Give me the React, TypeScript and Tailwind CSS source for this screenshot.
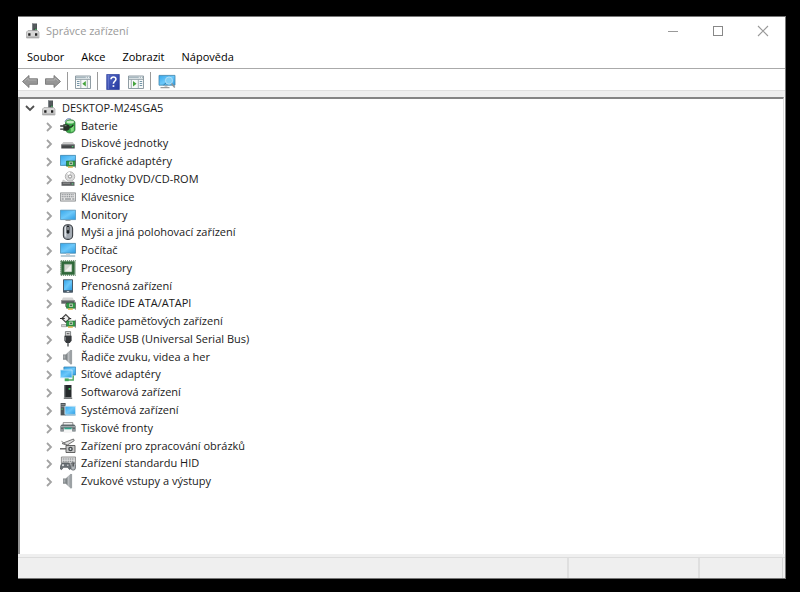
import React, { useState } from "react";

const Svg = ({ children }: { children: React.ReactNode }) => (
  <svg viewBox="0 0 16 16" className="block h-4 w-4 shrink-0" aria-hidden="true">
    {children}
  </svg>
);

const Gradients = () => (
  <svg className="absolute h-0 w-0" aria-hidden="true">
    <defs>
      <linearGradient id="screen" x1="0" y1="0" x2="1" y2="1">
        <stop offset="0" stopColor="#35a6ea" />
        <stop offset="0.5" stopColor="#6cc8fa" />
        <stop offset="1" stopColor="#2c9be2" />
      </linearGradient>
      <linearGradient id="speaker" x1="0" y1="0" x2="1" y2="0">
        <stop offset="0" stopColor="#707578" />
        <stop offset="0.6" stopColor="#c3c7ca" />
        <stop offset="1" stopColor="#777c80" />
      </linearGradient>
      <linearGradient id="help" x1="0" y1="0" x2="1" y2="1">
        <stop offset="0" stopColor="#5468c4" />
        <stop offset="1" stopColor="#2438a0" />
      </linearGradient>
    </defs>
  </svg>
);

const DeviceManagerIcon = () => (
  <Svg>
    <path d="M7 .5h5V9H7z" fill="#484d50" />
    <path d="M7 .5h1.2V9H7z" fill="#7c8285" />
    <path d="M9 2h2.5M9 4h2.5" stroke="#70777a" strokeWidth=".7" />
    <path d="M10.3 5.8h1.2V7h-1.2z" fill="#4cd06a" />
    <path d="M1.5 9 3 7.5h9.5L14 9v6H1.5z" fill="#d6d6d6" stroke="#999" strokeWidth=".6" />
    <path d="M2 13.5h11.5V15H2z" fill="#aaa" />
    <path d="M3.2 10.3h2.3v2.5H3.2zM10 10.3h2.3v2.5H10z" fill="#202020" />
  </Svg>
);

const BatteryIcon = () => (
  <Svg>
    <path d="M5 3.5C6 .8 9 0 11 1.3" fill="none" stroke="#5a73b0" strokeWidth=".9" />
    <path d="M5.5 4.5C5.5 2.6 8 1.7 10.2 1.7S15 2.6 15 4.5v7.3c0 2-2.5 3.2-4.8 3.2s-4.7-1.2-4.7-3.2z" fill="#38a847" stroke="#2b6f33" strokeWidth=".7" />
    <ellipse cx="10.2" cy="4" rx="3.8" ry="1.5" fill="#c5ebc2" />
    <path d="M10.8 10.5 13.8 7v5.5c-.7.8-1.8 1.2-3 1.3z" fill="#83dc80" />
    <path d="M.2 8h3.6M.2 11.2h3.6" stroke="#333" strokeWidth="1.3" />
    <path d="M3.3 6.3h2.9c2.2 0 3.6 1.2 3.6 3.2s-1.4 3.2-3.6 3.2H3.3z" fill="#273227" />
    <path d="M9.3 9.3c2 0 3.2-1 4-2.6" fill="none" stroke="#203a23" strokeWidth="1.4" />
    <path d="M4.5 7.7h2" stroke="#899489" strokeWidth=".9" />
  </Svg>
);

const DiskIcon = () => (
  <Svg>
    <path d="m3.3 7-2 2.7h13.4l-2-2.7z" fill="#c9c9c9" />
    <path d="M1.3 9.5h13.4v4H1.3z" fill="#454749" />
    <path d="M1.3 9.5h13.4v.8H1.3z" fill="#838688" />
    <path d="M11.8 11.2h1.6v1h-1.6z" fill="#52e082" />
  </Svg>
);

const Board = () => (
  <>
    <path d="M6.5 8h9v5.2h-9z" fill="#2e9a46" stroke="#1b612a" strokeWidth=".6" />
    <path d="M9.3 8.6h3.4v3.4H9.3z" fill="#d8dccc" />
    <path d="M10.1 9.4h1.8v1.8h-1.8z" fill="#366842" />
    <path d="M8 13.4h4.8v1.3H8z" fill="#d9ad37" />
    <path d="M15.4 6.8v8" stroke="#777" strokeWidth=".8" />
  </>
);

const GraphicsIcon = () => (
  <Svg>
    <path d="M.4 2.4h15.2v10H.4z" fill="url(#screen)" stroke="#3684ae" strokeWidth=".8" />
    <Board />
  </Svg>
);

const OpticalIcon = () => (
  <Svg>
    <circle cx="10" cy="5.5" r="4.7" fill="#dcdcdc" stroke="#a5a5a5" strokeWidth=".8" />
    <path d="M10 5.5 7 2.2A4.3 4.3 0 0 1 10 1z" fill="#fff" />
    <circle cx="10" cy="5.5" r="1.6" fill="#fff" stroke="#888" strokeWidth=".9" />
    <path d="m3 8.5-1.5 3h13L13.3 10 7 10.5z" fill="#c7c7c7" />
    <path d="M1.5 11h13v3.8h-13z" fill="#5c5e60" />
    <path d="M3 12.2h7" stroke="#aaa" strokeWidth=".7" />
    <path d="M11.8 12.4h1.5v1h-1.5z" fill="#5de286" />
  </Svg>
);

const KeyboardIcon = () => (
  <Svg>
    <path d="M.4 3.9h15.2v8.2H.4z" fill="#e4e4e4" stroke="#7d8184" strokeWidth=".8" />
    <path d="M1.7 5.7h12.6M1.7 7.7h12.6" stroke="#777c80" strokeWidth="1.1" strokeDasharray="1.1 .7" />
    <path d="M1.7 10h2M5 10h6M12.3 10h2" stroke="#777c80" strokeWidth="1.1" />
  </Svg>
);

const MonitorIcon = () => (
  <Svg>
    <path d="M.4 3.2h15.2v9.4H.4z" fill="url(#screen)" stroke="#4f91b6" strokeWidth=".8" />
    <path d="M5.5 13h5v.9h-5z" fill="#999" />
  </Svg>
);

const MouseIcon = () => (
  <Svg>
    <rect x="3.4" y=".7" width="9.2" height="14.7" rx="4" fill="#a4abb3" stroke="#3c4045" strokeWidth="1.1" />
    <path d="M4.7 4.5c0-1.4.7-2.2 1.6-2.5v11.3c-1-.5-1.6-1.3-1.6-2.3z" fill="#dfe3e7" />
    <rect x="6.6" y="1.5" width="2.8" height="8.2" rx="1.4" fill="#1c2024" />
    <path d="M8 3v3.2" stroke="#e3e8ec" strokeWidth="1" />
  </Svg>
);

const ComputerIcon = () => (
  <Svg>
    <path d="M.4 1.4h15.2v9.8H.4z" fill="url(#screen)" stroke="#4386ac" strokeWidth=".8" />
    <path d="M6 11.5h4V13H6z" fill="#d0d0d0" />
    <path d="M.8 14h14.4" stroke="#82a5b7" strokeWidth="1.1" />
  </Svg>
);

const CpuIcon = () => (
  <Svg>
    <path d="M.8.8h14.4v14.4H.8z" fill="none" stroke="#4d7a55" strokeWidth="1.2" strokeDasharray="1.2 .8" />
    <path d="M1.3 1.3h13.4v13.4H1.3z" fill="#2f6839" />
    <path d="M4.3 4.3h7.4v7.4H4.3z" fill="#d3d6d0" stroke="#9cb59f" strokeWidth=".6" />
    <path d="m4.6 11.4 6.8-6.8v6.8z" fill="#f2f2ef" />
  </Svg>
);

const PortableIcon = () => (
  <Svg>
    <rect x="3" y="1.2" width="10" height="13.6" rx=".7" fill="#485866" />
    <path d="M4 2.2h8v10H4z" fill="url(#screen)" />
    <path d="M6.8 13.5h2.4" stroke="#d5dce3" strokeWidth=".9" />
  </Svg>
);

const IdeIcon = () => (
  <Svg>
    <path d="M3 2.5h9.5L14.5 6H1.3z" fill="#d5d5d5" />
    <path d="M1.3 5.2h13.4v3.5H1.3z" fill="#606466" />
    <path d="M1.3 5.2h13.4V6H1.3z" fill="#999" />
    <path d="M5.5 8.5v3h2" fill="none" stroke="#777" strokeWidth=".8" />
    <Board />
  </Svg>
);

const StorageIcon = () => (
  <Svg>
    <path d="m1.8 5.5 4-4 4 4-4 3.7z" fill="#eee" stroke="#444" strokeWidth="1.1" />
    <path d="M0 5.5h4.8M8.5 5.5l2.7.1" stroke="#333" strokeWidth="1.2" />
    <path d="M1.5 11.5h5v2.2h-5z" fill="#d4d4d4" stroke="#888" strokeWidth=".6" />
    <Board />
  </Svg>
);

const UsbIcon = () => (
  <Svg>
    <path d="M5.4.6h5.2V5H5.4z" fill="#d9d9d9" stroke="#65696b" strokeWidth=".8" />
    <path d="M6.8 2h.9v1.2h-.9zM8.4 2h.9v1.2h-.9z" fill="#333" />
    <path d="M4.4 4.8h7.2v5L9.8 12H6.2L4.4 9.8z" fill="#35383b" />
    <path d="M5.5 6v3.7" stroke="#888c8e" strokeWidth=".8" />
    <path d="M7.2 12h1.6v3.5H7.2z" fill="#65696b" />
  </Svg>
);

const SpeakerIcon = () => (
  <Svg>
    <path d="M3 5.5h3.2v5.2H3z" fill="#7b8083" />
    <path d="m6 5.5 4.7-4.3v13.8L6 10.7z" fill="url(#speaker)" stroke="#8b9093" strokeWidth=".5" />
    <path d="M11.2 1v14.3" stroke="#9da2a5" strokeWidth="1.8" />
    <path d="M3.4 6.3h2v3.3h-2z" fill="#a9adb0" />
  </Svg>
);

const NetworkIcon = () => (
  <Svg>
    <path d="M3.9 1h11.7v8H3.9z" fill="url(#screen)" stroke="#3a87b5" strokeWidth=".8" />
    <path d="M.4 4h11.7v7.8H.4z" fill="url(#screen)" stroke="#c9e8f8" strokeWidth=".8" />
    <path d="M8 14h5.2V9.4" fill="none" stroke="#4ca860" strokeWidth="1.4" />
    <path d="M4.7 12.4h4v2.8h-4z" fill="#45a85c" />
  </Svg>
);

const SoftwareIcon = () => (
  <Svg>
    <path d="M4.5 1h7v12.5h-7z" fill="#25292b" />
    <path d="M4.5 1h1v12.5h-1z" fill="#5d6366" />
    <path d="M8.6 4h1.8v1.8H8.6z" fill="#48d66b" />
    <path d="M3.8 13.5h8.4V15H3.8z" fill="#76797b" />
  </Svg>
);

const SystemIcon = () => (
  <Svg>
    <path d="M.6 1h5v12.4h-5z" fill="#4e5558" />
    <path d="M1.3 2.7h3.5M1.3 4.7h3.5" stroke="#a1a8ab" strokeWidth=".8" />
    <path d="M1.5 6.5h1.2v1.2H1.5z" fill="#4cd06a" />
    <path d="M4.9 4.2h10.7v8.2H4.9z" fill="url(#screen)" stroke="#dbeaf2" strokeWidth=".8" />
    <path d="M5.2 13h10.4" stroke="#4b91ba" strokeWidth=".9" />
  </Svg>
);

const PrinterIcon = () => (
  <Svg>
    <path d="M3.2 2.6h9.6V6H3.2z" fill="#f5f5f5" stroke="#777" strokeWidth=".8" />
    <path d="M.4 6 1.8 4.6h12.4L15.6 6v5.6H.4z" fill="#5f696d" />
    <path d="M.8 6h14.4v1.4H.8z" fill="#9ea7aa" />
    <path d="M3.8 8h8.4v5H3.8z" fill="#f6f6f6" />
    <path d="M4.3 7.6h7.4v1.7H4.3z" fill="#2fa18a" />
    <path d="M.7 10h2.8M12.5 10h2.8" stroke="#bcc3c6" />
  </Svg>
);

const ImagingIcon = () => (
  <Svg>
    <path d="M2 5.5 13.5 1l.7 1.7L7 7.3z" fill="#dedede" stroke="#666" strokeWidth=".9" />
    <path d="m1.5 3.3 6 4.2" stroke="#777" />
    <path d="M6 7.5h9v7H6z" fill="#c6c6c6" stroke="#555" strokeWidth=".9" />
    <path d="M0 10.8h6" stroke="#555" strokeWidth="1.3" />
    <circle cx="10.5" cy="11" r="2.3" fill="#44494c" />
    <circle cx="10.5" cy="11" r=".9" fill="#d7dfe4" />
  </Svg>
);

const HidIcon = () => (
  <Svg>
    <path d="M1.4 2h14.2v6.2H1.4z" fill="#e6e6e6" stroke="#777" strokeWidth=".8" />
    <path d="M2.7 4h11.6M2.7 6.2h11.6" stroke="#707579" strokeWidth="1.1" strokeDasharray="1.2 .6" />
    <path d="M2.3 8h6.5c1.3 1 1.9 3.5 1.7 6-.7 1-1.6.5-2.5-1.7H3C2.4 14.8 1 15 .5 14 .3 11.3 1 9 2.3 8z" fill="#6c7277" stroke="#474d51" strokeWidth=".7" />
    <path d="M2 10.2h2M3 9.2v2M7 10.2h1.5" stroke="#fff" strokeWidth=".8" />
    <rect x="10.9" y="7.5" width="4.5" height="7.6" rx="2.1" fill="#b0b5b9" stroke="#555b60" strokeWidth=".8" />
    <path d="M13.1 8v3.5" stroke="#222" />
  </Svg>
);

const BackIcon = () => (
  <Svg>
    <path d="M.5 7.5 7 1.5v3.3h8.5v5.5H7v3.2z" fill="#969696" stroke="#777" strokeWidth=".9" />
    <path d="M2.5 7.2 6.2 4v2h8.3" fill="none" stroke="#b5b5b5" strokeWidth=".8" />
  </Svg>
);

const ForwardIcon = () => (
  <Svg>
    <path d="M15.5 7.5 9 1.5v3.3H.5v5.5H9v3.2z" fill="#969696" stroke="#777" strokeWidth=".9" />
    <path d="M1.5 6h8.3V4l3.6 3.2" fill="none" stroke="#b5b5b5" strokeWidth=".8" />
  </Svg>
);

const ConsoleTreeIcon = () => (
  <Svg>
    <path d="M.5 2h15v12.5H.5z" fill="#f7f9f9" stroke="#83929a" strokeWidth=".9" />
    <path d="M1 2.4h14v2H1z" fill="#a8b8c0" />
    <path d="M10.8 3.3h1M13 3.3h1" stroke="#fff" />
    <path d="M.8 5.5h14.4M5.8 5.5v9M12.3 5.5v9" stroke="#8f9da4" strokeWidth=".8" />
    <path d="M2 7.5h2.5M2 9.5h2.5M2 11.5h2.5" stroke="#64899e" strokeWidth=".9" />
    <path d="M10.8 7v5.4L7.3 9.7z" fill="#45a33c" />
  </Svg>
);

const ActionPaneIcon = () => (
  <Svg>
    <path d="M.5 2h15v12.5H.5z" fill="#f7f9f9" stroke="#83929a" strokeWidth=".9" />
    <path d="M1 2.4h14v2H1z" fill="#a8b8c0" />
    <path d="M10.8 3.3h1M13 3.3h1" stroke="#fff" />
    <path d="M.8 5.5h14.4M3.3 5.5v9M10.3 5.5v9" stroke="#8f9da4" strokeWidth=".8" />
    <path d="M11.7 7.5h2.5M11.7 9.5h2.5M11.7 11.5h2.5" stroke="#64899e" strokeWidth=".9" />
    <path d="M5 7v5.4l3.5-2.7z" fill="#45a33c" />
  </Svg>
);

const HelpIcon = () => (
  <Svg>
    <path d="M1.7.4h12.6v15.2H1.7z" fill="url(#help)" stroke="#2b3d9b" strokeWidth=".7" />
    <path d="M3.4 1v14" stroke="#7181d2" strokeWidth=".7" />
    <path d="M6 5.3C6 3.7 7 3 8.4 3s2.5.8 2.5 2.2c0 2-2.5 2.1-2.5 4.5" fill="none" stroke="#fff" strokeWidth="1.6" />
    <path d="M7.6 11.2h1.7v1.7H7.6z" fill="#fff" />
  </Svg>
);

const ScanIcon = () => (
  <svg viewBox="0 0 18 16" className="block h-4 w-[18px]" aria-hidden="true">
    <path d="M1 1.4h16v9.8H1z" fill="url(#screen)" stroke="#4386ac" strokeWidth=".8" />
    <path d="M2.5 13.7h9M6.5 12h3" stroke="#9b9b9b" strokeWidth="1.2" />
    <circle cx="11" cy="6.6" r="3.6" fill="#7fcdf4" stroke="#b5e0f6" strokeWidth=".9" />
    <path d="m13.5 9.5 3.3 4" stroke="#909699" strokeWidth="1.5" />
    <path d="m8 9-2.5 2" stroke="#3a84ad" />
  </svg>
);

const categories = [
  { label: "Baterie", Icon: BatteryIcon },
  { label: "Diskové jednotky", Icon: DiskIcon },
  { label: "Grafické adaptéry", Icon: GraphicsIcon },
  { label: "Jednotky DVD/CD-ROM", Icon: OpticalIcon },
  { label: "Klávesnice", Icon: KeyboardIcon },
  { label: "Monitory", Icon: MonitorIcon },
  { label: "Myši a jiná polohovací zařízení", Icon: MouseIcon },
  { label: "Počítač", Icon: ComputerIcon },
  { label: "Procesory", Icon: CpuIcon },
  { label: "Přenosná zařízení", Icon: PortableIcon },
  { label: "Řadiče IDE ATA/ATAPI", Icon: IdeIcon },
  { label: "Řadiče paměťových zařízení", Icon: StorageIcon },
  { label: "Řadiče USB (Universal Serial Bus)", Icon: UsbIcon },
  { label: "Řadiče zvuku, videa a her", Icon: SpeakerIcon },
  { label: "Síťové adaptéry", Icon: NetworkIcon },
  { label: "Softwarová zařízení", Icon: SoftwareIcon },
  { label: "Systémová zařízení", Icon: SystemIcon },
  { label: "Tiskové fronty", Icon: PrinterIcon },
  { label: "Zařízení pro zpracování obrázků", Icon: ImagingIcon },
  { label: "Zařízení standardu HID", Icon: HidIcon },
  { label: "Zvukové vstupy a výstupy", Icon: SpeakerIcon },
];

const menus = ["Soubor", "Akce", "Zobrazit", "Nápověda"];

const Separator = () => <span className="-ml-px h-5 w-px bg-[#9a9a9a]" />;

const ToolButton = ({ label, children }: { label: string; children: React.ReactNode }) => (
  <button type="button" aria-label={label} className="shrink-0">
    {children}
  </button>
);

const Chevron = ({ open }: { open?: boolean }) => (
  <svg viewBox="0 0 10 10" className="h-2.5 w-2.5" fill="none" aria-hidden="true">
    {open ? (
      <path d="m1 3 4 4 4-4" stroke="#505050" strokeWidth="1.8" />
    ) : (
      <path d="m3 1 4 4-4 4" stroke="#a3a3a3" strokeWidth="1.8" />
    )}
  </svg>
);

const TitleBar = () => (
  <header className="flex h-7 items-center pl-[7px] text-[#999]">
    <DeviceManagerIcon />
    <h1 className="ml-[5px] flex-1">Správce zařízení</h1>
    <button type="button" aria-label="Minimalizovat" className="flex h-full w-[45px] items-center justify-center">
      <span className="h-px w-2.5 bg-[#999]" />
    </button>
    <button type="button" aria-label="Maximalizovat" className="flex h-full w-[45px] items-center justify-center">
      <span className="h-2.5 w-2.5 border border-[#888]" />
    </button>
    <button type="button" aria-label="Zavřít" className="flex h-full w-[45px] items-center justify-center">
      <svg viewBox="0 0 12 12" className="h-3 w-3" aria-hidden="true">
        <path d="m1 1 10 10M11 1 1 11" stroke="#999" strokeWidth="1.1" />
      </svg>
    </button>
  </header>
);

const Toolbar = () => (
  <div role="toolbar" aria-label="Nástroje" className="flex h-[21px] items-center gap-[7px] pt-1 pl-1">
    <ToolButton label="Zpět"><BackIcon /></ToolButton>
    <ToolButton label="Vpřed"><ForwardIcon /></ToolButton>
    <Separator />
    <ToolButton label="Zobrazit strom konzoly"><ConsoleTreeIcon /></ToolButton>
    <Separator />
    <ToolButton label="Nápověda"><HelpIcon /></ToolButton>
    <ToolButton label="Zobrazit podokno akcí"><ActionPaneIcon /></ToolButton>
    <Separator />
    <ToolButton label="Vyhledat změny hardwaru"><ScanIcon /></ToolButton>
  </div>
);

const DeviceTree = () => {
  const [open, setOpen] = useState(true);

  return (
    <ul role="tree" aria-label="Zařízení" className="grid h-[391px] auto-rows-fr">
      <li role="treeitem" aria-level={1} aria-expanded={open} className="flex items-center pl-[5px]">
        <button type="button" aria-label="DESKTOP-M24SGA5" onClick={() => setOpen(!open)}>
          <Chevron open={open} />
        </button>
        <span className="ml-1.5 flex items-center gap-[5px]">
          <DeviceManagerIcon />
          <span>DESKTOP-M24SGA5</span>
        </span>
      </li>
      {open &&
        categories.map(({ label, Icon }) => (
          <li key={label} role="treeitem" aria-level={2} aria-expanded={false} className="flex items-center pl-6">
            <button type="button" aria-label={label} className="pt-0.5">
              <Chevron />
            </button>
            <span className="ml-1.5 flex items-center gap-[5px]">
              <Icon />
              <span>{label}</span>
            </span>
          </li>
        ))}
    </ul>
  );
};

const App = () => (
  <main className="flex min-h-screen bg-black pt-4 pr-3.5 pb-[13px] pl-[18px] font-['Open_Sans','Noto_Sans',sans-serif] text-[11px] leading-4 text-[#1a1a1a]">
    <Gradients />
    <div className="flex min-w-0 flex-1 flex-col border-t border-r border-b border-[#777] bg-white">
      <TitleBar />
      <nav className="flex h-6 items-center gap-[17px] border-b border-[#aaa] pl-[9px] text-black">
        {menus.map((item) => (
          <button key={item} type="button">
            {item}
          </button>
        ))}
      </nav>
      <Toolbar />
      <div className="h-[7px] border-t border-[#e0e0e0] bg-[#efefef]" />
      <section className="mr-px flex-1 border-t-2 border-r border-l-2 border-t-[#858585] border-r-[#ddd] border-l-[#929292]">
        <DeviceTree />
      </section>
      <footer className="flex h-6 flex-col bg-[#efefef] pt-[3px]">
        <div className="flex flex-1 border-t border-[#dcdcdc] pr-0.5">
          <span className="flex-1 border-r-2 border-[#dfdfdf]" />
          <span className="w-[131px] border-r-2 border-[#dfdfdf]" />
          <span className="w-[83px] border-r border-[#d5d5d5]" />
        </div>
      </footer>
    </div>
  </main>
);

export default App;
